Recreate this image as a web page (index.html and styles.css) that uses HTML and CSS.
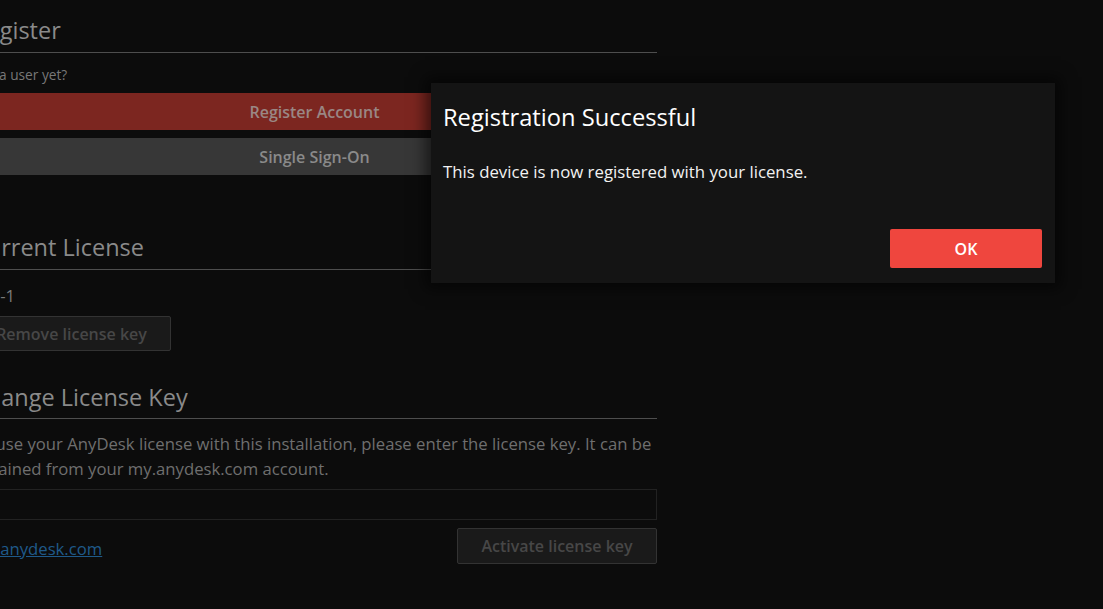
FILE: index.html
```html
<!DOCTYPE html>
<html>
<head>
<meta charset="utf-8">
<link rel="stylesheet" href="styles.css">
</head>
<body>
<div class="page">
  <main class="column">
    <section class="section">
      <h2 class="heading">Register</h2>
      <p class="hint">Not a user yet?</p>
      <div class="btn-stack">
        <button class="wide-btn red">Register Account</button>
        <button class="wide-btn gray">Single Sign-On</button>
      </div>
    </section>
    <section class="section license">
      <h2 class="heading">Current License</h2>
      <p class="license-name">Lite-1</p>
      <button class="dim-btn remove">Remove license key</button>
    </section>
    <section class="section change">
      <h2 class="heading">Change License Key</h2>
      <p class="para">To use your AnyDesk license with this installation, please enter the license key. It can be obtained from your my.anydesk.com account.</p>
      <div class="key-input"></div>
      <div class="footer-row">
        <a class="link" href="#">my.anydesk.com</a>
        <button class="dim-btn activate">Activate license key</button>
      </div>
    </section>
  </main>
</div>
<div class="dialog">
  <h1 class="dialog-title">Registration Successful</h1>
  <p class="dialog-text">This device is now registered with your license.</p>
  <div class="dialog-actions">
    <button class="ok-btn">OK</button>
  </div>
</div>
</body>
</html>
```
FILE: styles.css
```css
html, body {
  margin: 0;
  padding: 0;
  background: #0c0c0c;
  overflow: hidden;
  width: 1103px;
  height: 609px;
  font-family: "Open Sans", "Noto Sans", sans-serif;
}
.page {
  width: 1103px;
  height: 609px;
}
.column {
  margin-left: -28px;
  width: 685px;
  display: flex;
  flex-direction: column;
}
.section {
  display: flex;
  flex-direction: column;
}
.heading {
  margin: 0;
  font-weight: 400;
  font-size: 23.5px;
  line-height: 30px;
  color: #8a8a8a;
  padding-top: 15px;
  padding-bottom: 7px;
  border-bottom: 1px solid #4e4e4e;
}
.hint {
  margin: 0;
  margin-top: 12px;
  font-size: 13.7px;
  line-height: 20px;
  color: #787878;
}
.btn-stack {
  margin-top: 8px;
  display: flex;
  flex-direction: column;
  gap: 8px;
}
.wide-btn {
  border: none;
  height: 37px;
  font-family: inherit;
  font-size: 16px;
  font-weight: 600;
  padding: 0;
}
.wide-btn.red {
  background: #7c2620;
  color: #9a8784;
}
.wide-btn.gray {
  background: #373737;
  color: #8a8a8a;
}
.license {
  margin-top: 57px;
}
.license .heading {
  padding-top: 0;
}
.license-name {
  margin: 0;
  margin-top: 13px;
  font-size: 16.7px;
  line-height: 26px;
  color: #7a7a7a;
}
.dim-btn {
  align-self: flex-start;
  height: 36px;
  padding: 0;
  background: #1a1a1a;
  border: 1px solid #333;
  border-radius: 2px;
  color: #474747;
  font-family: inherit;
  font-size: 16px;
  font-weight: 600;
}
.remove {
  margin-top: 7px;
  height: 35px;
  width: 199px;
}
.change {
  margin-top: 31px;
}
.change .heading {
  padding-top: 0;
  padding-bottom: 6px;
}
.para {
  margin: 0;
  margin-top: 12px;
  font-size: 16.7px;
  line-height: 25px;
  color: #6f6f6f;
}
.key-input {
  margin-top: 8px;
  height: 29px;
  border: 1px solid #222;
  background: #0c0c0c;
}
.footer-row {
  margin-top: 8px;
  display: flex;
  justify-content: space-between;
  align-items: center;
}
.link {
  color: #1f5a8a;
  font-size: 16.7px;
  text-decoration: underline;
  margin-top: 4px;
}
.activate {
  width: 200px;
}
.dialog {
  position: absolute;
  left: 431px;
  top: 83px;
  width: 624px;
  height: 200px;
  box-sizing: border-box;
  background: #141414;
  box-shadow: 0 0 14px 6px rgba(0,0,0,0.55);
  padding: 0 13px 15px 12px;
  display: flex;
  flex-direction: column;
}
.dialog-title {
  margin: 0;
  margin-top: 18px;
  font-size: 23.7px;
  font-weight: 400;
  line-height: 32px;
  color: #ffffff;
}
.dialog-text {
  margin: 0;
  margin-top: 27px;
  font-size: 16.8px;
  line-height: 24px;
  color: #f2f2f2;
}
.dialog-actions {
  margin-top: auto;
  display: flex;
  justify-content: flex-end;
}
.ok-btn {
  width: 152px;
  height: 39px;
  background: #ef463e;
  border: none;
  border-radius: 2px;
  color: #ffffff;
  font-family: inherit;
  font-size: 16px;
  font-weight: 600;
}
```
